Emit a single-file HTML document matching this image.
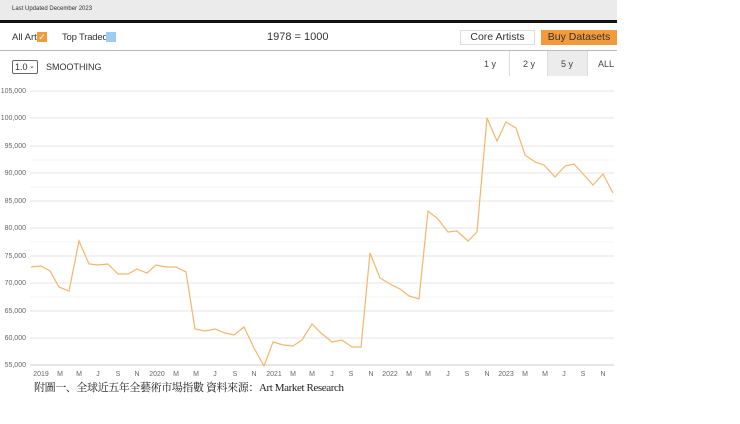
<!DOCTYPE html>
<html><head><meta charset="utf-8"><style>
body{margin:0;width:740px;height:424px;background:#fff;font-family:"Liberation Sans",sans-serif;position:relative;overflow:hidden}
.a{position:absolute;white-space:nowrap}
</style></head><body>
<div class="a" style="left:0;top:0;width:617px;height:20px;background:#ebebeb"></div>
<div class="a" style="left:12px;top:6px;font-size:6px;color:#333">Last Updated December 2023</div>
<div class="a" style="left:0;top:20px;width:617px;height:3px;background:#111"></div>
<div class="a" style="left:12px;top:32px;font-size:9.5px;color:#333">All Art</div>
<div class="a" style="left:37px;top:32px;width:10px;height:10px;background:#f39b3a;color:#fff;font-size:9px;line-height:10px;text-align:center">✓</div>
<div class="a" style="left:62px;top:32px;font-size:9.5px;color:#333;letter-spacing:-0.2px">Top Traded</div>
<div class="a" style="left:106px;top:32px;width:10px;height:10px;background:#9ccbf6"></div>
<div class="a" style="left:267px;top:31px;font-size:11px;color:#333">1978 = 1000</div>
<div class="a" style="left:460px;top:30px;width:73px;height:13px;border:1px solid #ddd;font-size:10.5px;line-height:13px;text-align:center;color:#333">Core Artists</div>
<div class="a" style="left:541px;top:30px;width:76px;height:15px;background:#f39b3a;font-size:10.5px;line-height:15px;text-align:center;color:#333">Buy Datasets</div>
<div class="a" style="left:0;top:50px;width:617px;height:1px;background:#bbb"></div>
<div class="a" style="left:12px;top:60px;width:24px;height:12px;border:1px solid #666;border-radius:2px;font-size:9px;line-height:12px;color:#333"><span style="position:absolute;left:2px">1.0</span><span style="position:absolute;left:16px;font-size:7px">⌄</span></div>
<div class="a" style="left:46px;top:62px;font-size:9px;color:#333">SMOOTHING</div>
<div class="a" style="left:509px;top:51px;width:38px;height:25px;border-left:1px solid #ddd"></div>
<div class="a" style="left:547px;top:51px;width:39px;height:25px;background:#ececec;border-left:1px solid #ddd;border-right:1px solid #ddd"></div>
<div class="a" style="left:484px;top:59px;font-size:9px;color:#444">1 y</div>
<div class="a" style="left:523px;top:59px;font-size:9px;color:#444">2 y</div>
<div class="a" style="left:561px;top:59px;font-size:9px;color:#444">5 y</div>
<div class="a" style="left:598px;top:59px;font-size:9px;color:#444">ALL</div>
<svg class="a" style="left:0;top:80px" width="740" height="300" viewBox="0 80 740 300">
<g stroke="#e6e6e6" stroke-width="1">
<line x1="30" x2="614" y1="91" y2="91"/><line x1="30" x2="614" y1="118" y2="118"/><line x1="30" x2="614" y1="146" y2="146"/><line x1="30" x2="614" y1="173" y2="173"/><line x1="30" x2="614" y1="201" y2="201"/><line x1="30" x2="614" y1="228" y2="228"/><line x1="30" x2="614" y1="256" y2="256"/><line x1="30" x2="614" y1="283" y2="283"/><line x1="30" x2="614" y1="311" y2="311"/><line x1="30" x2="614" y1="338" y2="338"/><line x1="30" x2="614" y1="365" y2="365" stroke="#ccc"/>
</g>
<g stroke="#f4f4f4"><line x1="30" x2="614" y1="160" y2="160"/><line x1="30" x2="614" y1="187" y2="187"/><line x1="30" x2="614" y1="242" y2="242"/><line x1="30" x2="614" y1="297" y2="297"/></g>
<g font-size="7" fill="#666" text-anchor="end">
<text x="26" y="93">105,000</text><text x="26" y="120">100,000</text><text x="26" y="148">95,000</text><text x="26" y="175">90,000</text><text x="26" y="203">85,000</text><text x="26" y="230">80,000</text><text x="26" y="258">75,000</text><text x="26" y="285">70,000</text><text x="26" y="313">65,000</text><text x="26" y="340">60,000</text><text x="26" y="367">55,000</text>
</g>
<g font-size="7" fill="#666" text-anchor="middle">
<text x="41" y="376">2019</text><text x="60" y="376">M</text><text x="79" y="376">M</text><text x="98" y="376">J</text><text x="118" y="376">S</text><text x="137" y="376">N</text><text x="157" y="376">2020</text><text x="176" y="376">M</text><text x="196" y="376">M</text><text x="215" y="376">J</text><text x="235" y="376">S</text><text x="254" y="376">N</text><text x="274" y="376">2021</text><text x="293" y="376">M</text><text x="312" y="376">M</text><text x="332" y="376">J</text><text x="351" y="376">S</text><text x="371" y="376">N</text><text x="390" y="376">2022</text><text x="409" y="376">M</text><text x="428" y="376">M</text><text x="448" y="376">J</text><text x="467" y="376">S</text><text x="487" y="376">N</text><text x="506" y="376">2023</text><text x="525" y="376">M</text><text x="545" y="376">M</text><text x="564" y="376">J</text><text x="583" y="376">S</text><text x="603" y="376">N</text>
</g>
<polyline fill="none" stroke="#f5b56c" stroke-width="1.2" points="31,267 41,266 50,271 59,287 69,291 79,241 89,264 98,265 108,264 118,274 128,274 137,269 147,273 156,265 166,267 176,267 186,272 195,329 205,331 215,329 225,333 234,335 244,327 254,348 264,366 273,342 283,345 293,346 302,340 312,324 321,333 332,342 342,340 352,347 361,347 370,253 380,278 390,284 400,289 409,296 419,299 428,211 438,219 448,232 457,231 468,241 477,232 487,118 497,141 506,122 516,128 525,155 535,162 544,165 555,177 565,166 574,164 584,175 593,185 603,174 613,193"/>
</svg>
<div class="a" style="left:34px;top:379px;font-size:11px;color:#222;font-family:'Liberation Serif','Noto Serif CJK SC',serif;letter-spacing:-0.4px">附圖一、全球近五年全藝術市場指數 資料來源：Art Market Research</div>
</body></html>
